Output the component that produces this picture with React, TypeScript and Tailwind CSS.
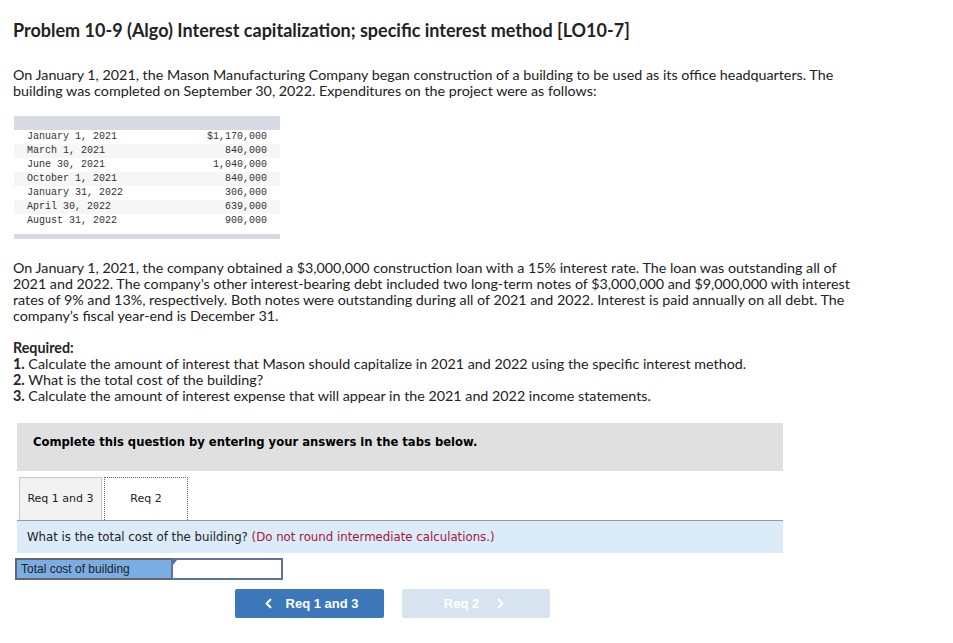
import { ChevronLeft, ChevronRight } from 'lucide-react';

const rows: [string, string][] = [
  ['January 1, 2021', '$1,170,000'],
  ['March 1, 2021', '840,000'],
  ['June 30, 2021', '1,040,000'],
  ['October 1, 2021', '840,000'],
  ['January 31, 2022', '306,000'],
  ['April 30, 2022', '639,000'],
  ['August 31, 2022', '900,000'],
];

const sans = { fontFamily: 'Lato, "Open Sans", sans-serif' };
const verdana = { fontFamily: '"DejaVu Sans", Verdana, sans-serif' };

const App = () => {
  return (
    <div className="min-h-[643px] w-[953px] bg-white pl-[13px] pt-[18px] text-[#222]" style={sans}>
      <h1 className="text-[18px] leading-6 font-bold">
        Problem 10-9 (Algo) Interest capitalization; specific interest method [LO10-7]
      </h1>

      <p className="mt-[25px] max-w-[852px] text-[14.3px] leading-4">
        On January 1, 2021, the Mason Manufacturing Company began construction of a building to be used as its office
        headquarters. The building was completed on September 30, 2022. Expenditures on the project were as follows:
      </p>

      <div className="mt-[17px] ml-px w-[266px]">
        <div className="h-[14px] bg-[#d6dae4]"></div>
        {rows.map(([d, a], i) => (
          <div
            key={d}
            className={`flex h-[14px] items-center justify-between pl-[13px] pr-[13px] text-[10px] leading-[14px] text-[#333] ${
              i % 2 ? 'bg-[#f6f6f6]' : 'bg-white'
            }`}
            style={{ fontFamily: '"Liberation Mono", monospace' }}
          >
            <span>{d}</span>
            <span>{a}</span>
          </div>
        ))}
        <div className="h-[6px]"></div>
        <div className="h-[5px] bg-[#d6dae4]"></div>
      </div>

      <p className="mt-[21px] max-w-[852px] text-[14.3px] leading-4">
        On January 1, 2021, the company obtained a $3,000,000 construction loan with a 15% interest rate. The loan was
        outstanding all of 2021 and 2022. The company’s other interest-bearing debt included two long-term notes of
        $3,000,000 and $9,000,000 with interest rates of 9% and 13%, respectively. Both notes were outstanding during all
        of 2021 and 2022. Interest is paid annually on all debt. The company’s fiscal year-end is December 31.
      </p>

      <div className="mt-[16px] text-[14.3px] leading-4">
        <p className="font-bold">Required:</p>
        <p>
          <b>1.</b> Calculate the amount of interest that Mason should capitalize in 2021 and 2022 using the specific
          interest method.
        </p>
        <p>
          <b>2.</b> What is the total cost of the building?
        </p>
        <p>
          <b>3.</b> Calculate the amount of interest expense that will appear in the 2021 and 2022 income statements.
        </p>
      </div>

      <div className="mt-[19px] ml-[4px] w-[766px]" style={verdana}>
        <div className="flex h-[48px] items-start bg-[#e0e0e0] pl-[16px] pt-[11px]">
          <span className="text-[11.6px] font-bold text-black">
            Complete this question by entering your answers in the tabs below.
          </span>
        </div>

        <div className="mt-[6px] flex items-end gap-[2px] pl-[2px]">
          <div className="flex h-[43px] w-[83px] items-center justify-center border border-b-0 border-[#c8c8c8] bg-[#f2f2f2] text-[11px] text-[#222]">
            Req 1 and 3
          </div>
          <div className="flex h-[43px] w-[84px] items-center justify-center border border-dotted border-b-0 border-[#3a6ea5] bg-white text-[11px] text-[#222]">
            Req 2
          </div>
        </div>
        <div className="border-t border-[#999] bg-[#dbebf8] py-[8px] pl-[10px] text-[11.75px] leading-4 text-[#222]">
          What is the total cost of the building? <span className="text-[#a3173a]">(Do not round intermediate calculations.)</span>
        </div>
      </div>

      <div className="mt-[5px] ml-[2px] flex h-[22px] w-[268px]">
        <div
          className="flex w-[156px] items-center border-2 border-r-0 border-[#666] bg-[#7aade3] pl-[4px] text-[12px] text-[#222]"
          style={{ fontFamily: '"Liberation Sans", Arial, sans-serif' }}
        >
          Total cost of building
        </div>
        <div className="relative flex-1 border-2 border-[#5b7395] bg-white">
          <span className="absolute left-0 top-0 h-0 w-0 border-t-[5px] border-r-[4px] border-t-[#3b78b9] border-r-transparent"></span>
        </div>
      </div>

      <div
        className="mt-[9px] flex gap-[18px] pl-[222px]"
        style={{ fontFamily: '"Liberation Sans", Arial, sans-serif' }}
      >
        <button className="flex h-[29px] w-[149px] items-center justify-center gap-[10px] rounded-[2px] bg-[#3b77b9] text-[13px] font-bold text-white">
          <ChevronLeft size={15} strokeWidth={3.5} />
          <span>Req 1 and 3</span>
        </button>
        <button className="flex h-[29px] w-[148px] items-center justify-center gap-[14px] rounded-[2px] bg-[#d8e3f0] text-[13px] font-bold text-white">
          <span>Req 2</span>
          <ChevronRight size={15} strokeWidth={3.5} />
        </button>
      </div>
    </div>
  );
};

export default App;
